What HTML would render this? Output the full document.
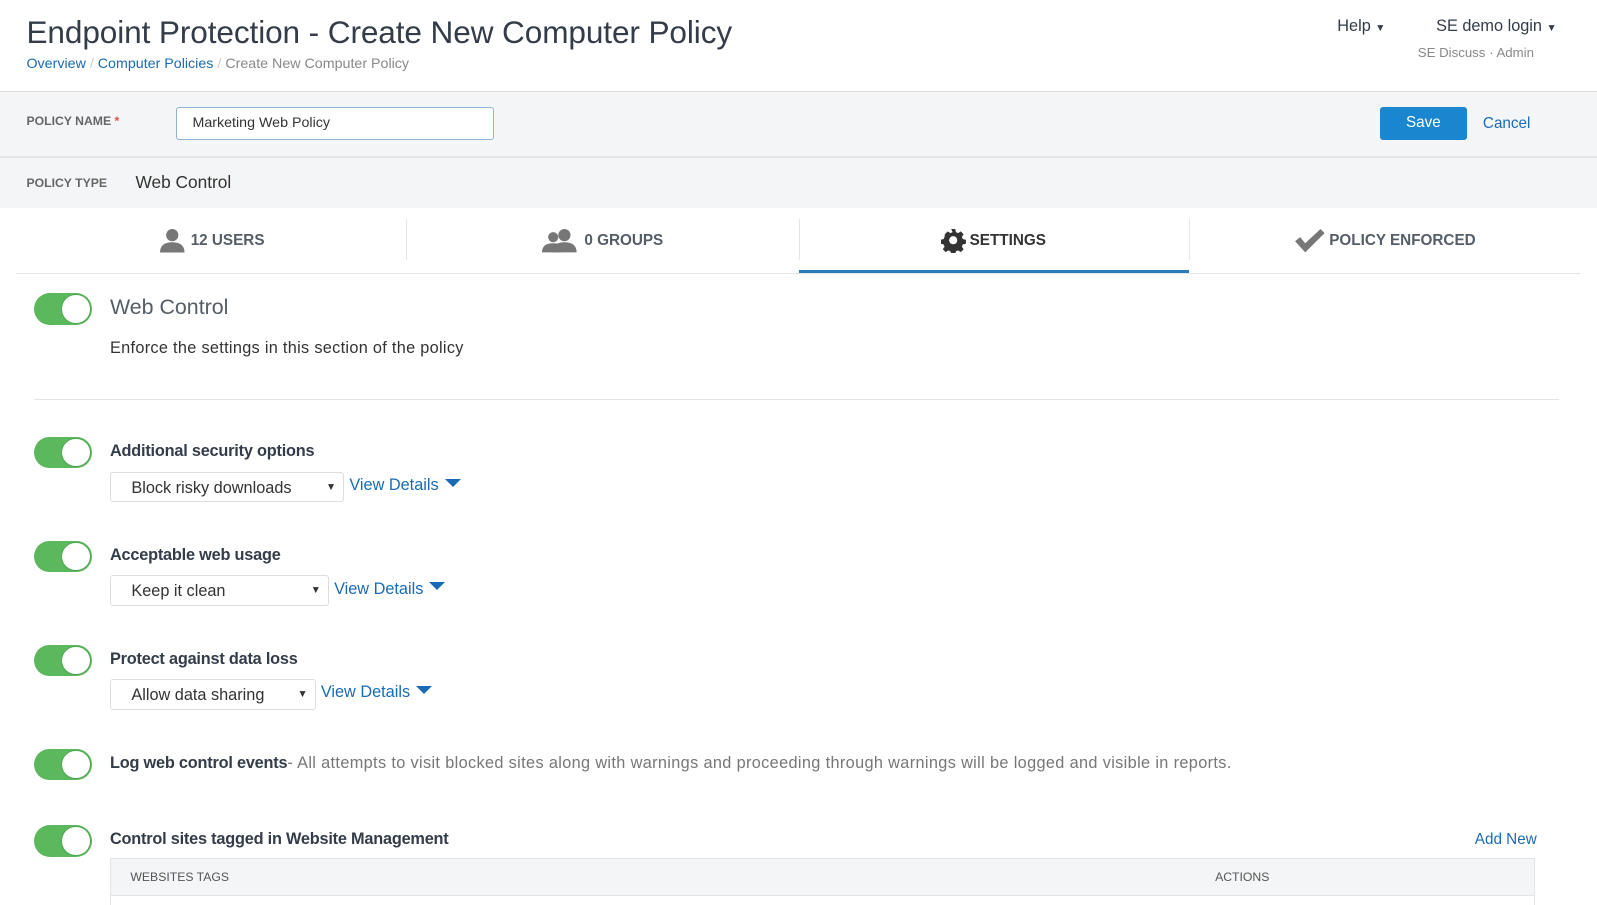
<!DOCTYPE html>
<html><head><meta charset="utf-8"><style>
html,body{margin:0;padding:0;background:#fff;overflow:hidden}
body{width:1597px;height:905px}
#w{zoom:1.0185;position:relative;width:1568px;height:889px;font-family:"Liberation Sans",sans-serif;color:#333c48}
.a{position:absolute;white-space:nowrap}
.lnk{color:#1a6bb5}
.tg{position:absolute;left:33px;width:57px;height:31px;border-radius:16px;background:#5cb85c}
.tg:after{content:"";position:absolute;right:2px;top:2px;width:27px;height:27px;border-radius:50%;background:#fff;box-shadow:0 0 0 1px #4fa64f}
.lbl{font-size:16px;font-weight:bold;color:#333c48;letter-spacing:-0.2px}
.sel{position:absolute;height:30px;border:1px solid #ddd;border-radius:3px;background:#fff;font-size:16px;color:#333;line-height:30px;padding-left:20px;box-sizing:border-box}
.sel i{position:absolute;right:7px;top:0;font-style:normal;font-size:10px}
.vd{font-size:16px;color:#1a6bb5}
.vd b{display:inline-block;width:0;height:0;border-left:8px solid transparent;border-right:8px solid transparent;border-top:8px solid #1a6bb5;margin-left:6px;vertical-align:3px}
.tab{position:absolute;top:204px;height:64px;font-size:15px;font-weight:bold;color:#555d66;display:flex;align-items:center;justify-content:center;gap:4px}
</style></head><body><div id="w">
<div class="a" style="left:26px;top:14px;font-size:31px;letter-spacing:-0.1px">Endpoint Protection - Create New Computer Policy</div>
<div class="a" style="left:26px;top:55px;font-size:14px"><span class="lnk">Overview</span> <span style="color:#ccc">/</span> <span class="lnk">Computer Policies</span> <span style="color:#ccc">/</span> <span style="color:#888">Create New Computer Policy</span></div>
<div class="a" style="left:1313px;top:17px;font-size:16px">Help <span style="font-size:10px">▼</span></div>
<div class="a" style="left:1410px;top:17px;font-size:16px">SE demo login <span style="font-size:10px">▼</span></div>
<div class="a" style="left:1392px;top:44px;font-size:13px;color:#888">SE Discuss · Admin</div>
<div class="a" style="left:0;top:89px;width:1568px;height:1px;background:#ddd"></div>
<div class="a" style="left:0;top:90px;width:1568px;height:63px;background:#f4f5f6"></div>
<div class="a" style="left:0;top:153px;width:1568px;height:2px;background:#e3e4e6"></div>
<div class="a" style="left:0;top:155px;width:1568px;height:49px;background:#f4f5f6"></div>
<div class="a" style="left:26px;top:112px;font-size:12px;font-weight:bold;color:#666">POLICY NAME <span style="color:#d9534f">*</span></div>
<div class="a" style="left:173px;top:105px;width:312px;height:32px;box-sizing:border-box;border:1px solid #8fb3d6;border-radius:3px;background:#fff;font-size:14px;line-height:30px;padding-left:15px;color:#333">Marketing Web Policy</div>
<div class="a" style="left:1355px;top:105px;width:85px;height:32px;background:#1a86d0;border-radius:3px;color:#fff;font-size:15px;text-align:center;line-height:32px">Save</div>
<div class="a" style="left:1456px;top:113px;font-size:15px;color:#1a6bb5">Cancel</div>
<div class="a" style="left:26px;top:173px;font-size:12px;font-weight:bold;color:#666">POLICY TYPE</div>
<div class="a" style="left:133px;top:169px;font-size:17px;color:#333">Web Control</div>
<div class="a" style="left:16px;top:268px;width:1535px;height:1px;background:#e3e4e6"></div>
<div class="a" style="left:399px;top:215px;width:1px;height:40px;background:#e6e6e6"></div>
<div class="a" style="left:784px;top:215px;width:1px;height:40px;background:#e6e6e6"></div>
<div class="a" style="left:1167px;top:215px;width:1px;height:40px;background:#e6e6e6"></div>
<div class="a" style="left:784px;top:265px;width:383px;height:3px;background:#2d7ab8"></div>
<div class="tab" style="left:16px;width:383px"><svg width="28" height="24" viewBox="0 0 28 24"><circle cx="14" cy="7" r="6" fill="#777"/><path d="M2 24c0-8 6-10 12-10s12 2 12 10z" fill="#777"/></svg>12 USERS</div>
<div class="tab" style="left:399px;width:385px"><svg width="38" height="24" viewBox="0 0 38 24"><circle cx="11" cy="9" r="5" fill="#777"/><path d="M0 24c0-7 5-9 11-9s8 2 8 9z" fill="#777"/><circle cx="22" cy="7" r="6" fill="#777"/><path d="M10 24c0-8 6-10 12-10s12 2 12 10z" fill="#777"/></svg>0 GROUPS</div>
<div class="tab" style="left:784px;width:383px;color:#333"><svg width="24" height="24" viewBox="0 0 24 24"><path fill="#333" d="M10 1h4l.6 3 2.2 1 2.6-1.7 2.8 2.8-1.7 2.6 1 2.2 3 .6v4l-3 .6-1 2.2 1.7 2.6-2.8 2.8-2.6-1.7-2.2 1-.6 3h-4l-.6-3-2.2-1-2.6 1.7-2.800-2.8 1.7-2.6-1-2.2-3-.6v-4l3-.6 1-2.2L3.8 6.1 6.6 3.3l2.6 1.7 2.2-1z"/><circle cx="12" cy="12" r="4" fill="#fff"/></svg>SETTINGS</div>
<div class="tab" style="left:1167px;width:384px"><svg width="32" height="24" viewBox="0 0 32 24"><path d="M2 13l5-4 5 6L27 1l4 4-19 19z" fill="#777"/></svg>POLICY ENFORCED</div>
<div class="tg" style="top:288px"></div>
<div class="a" style="left:108px;top:290px;font-size:21px;color:#555d66">Web Control</div>
<div class="a" style="left:108px;top:333px;font-size:16px;color:#333;letter-spacing:0.3px">Enforce the settings in this section of the policy</div>
<div class="a" style="left:33px;top:392px;width:1498px;height:1px;background:#e3e4e6"></div>
<div class="tg" style="top:429px"></div>
<div class="a lbl" style="left:108px;top:434px">Additional security options</div>
<div class="sel" style="left:108px;top:463px;width:230px">Block risky downloads<i>▼</i></div>
<div class="a vd" style="left:343px;top:467px">View Details<b></b></div>
<div class="tg" style="top:531px"></div>
<div class="a lbl" style="left:108px;top:536px">Acceptable web usage</div>
<div class="sel" style="left:108px;top:565px;width:215px">Keep it clean<i>▼</i></div>
<div class="a vd" style="left:328px;top:569px">View Details<b></b></div>
<div class="tg" style="top:633px"></div>
<div class="a lbl" style="left:108px;top:638px">Protect against data loss</div>
<div class="sel" style="left:108px;top:667px;width:202px">Allow data sharing<i>▼</i></div>
<div class="a vd" style="left:315px;top:671px">View Details<b></b></div>
<div class="tg" style="top:735px"></div>
<div class="a" style="left:108px;top:740px;font-size:16px;color:#777;letter-spacing:0.35px"><span class="lbl">Log web control events</span>- All attempts to visit blocked sites along with warnings and proceeding through warnings will be logged and visible in reports.</div>
<div class="tg" style="top:810px"></div>
<div class="a lbl" style="left:108px;top:815px">Control sites tagged in Website Management</div>
<div class="a" style="left:1448px;top:816px;font-size:15px;color:#1a6bb5">Add New</div>
<div class="a" style="left:108px;top:842px;width:1399px;height:38px;box-sizing:border-box;background:#f4f5f6;border:1px solid #e3e4e6"></div>
<div class="a" style="left:108px;top:880px;width:1px;height:10px;background:#e3e4e6"></div>
<div class="a" style="left:1506px;top:880px;width:1px;height:10px;background:#e3e4e6"></div>
<div class="a" style="left:128px;top:854px;font-size:12px;color:#555">WEBSITES TAGS</div>
<div class="a" style="left:1193px;top:854px;font-size:12px;color:#555">ACTIONS</div>
</div></body></html>
